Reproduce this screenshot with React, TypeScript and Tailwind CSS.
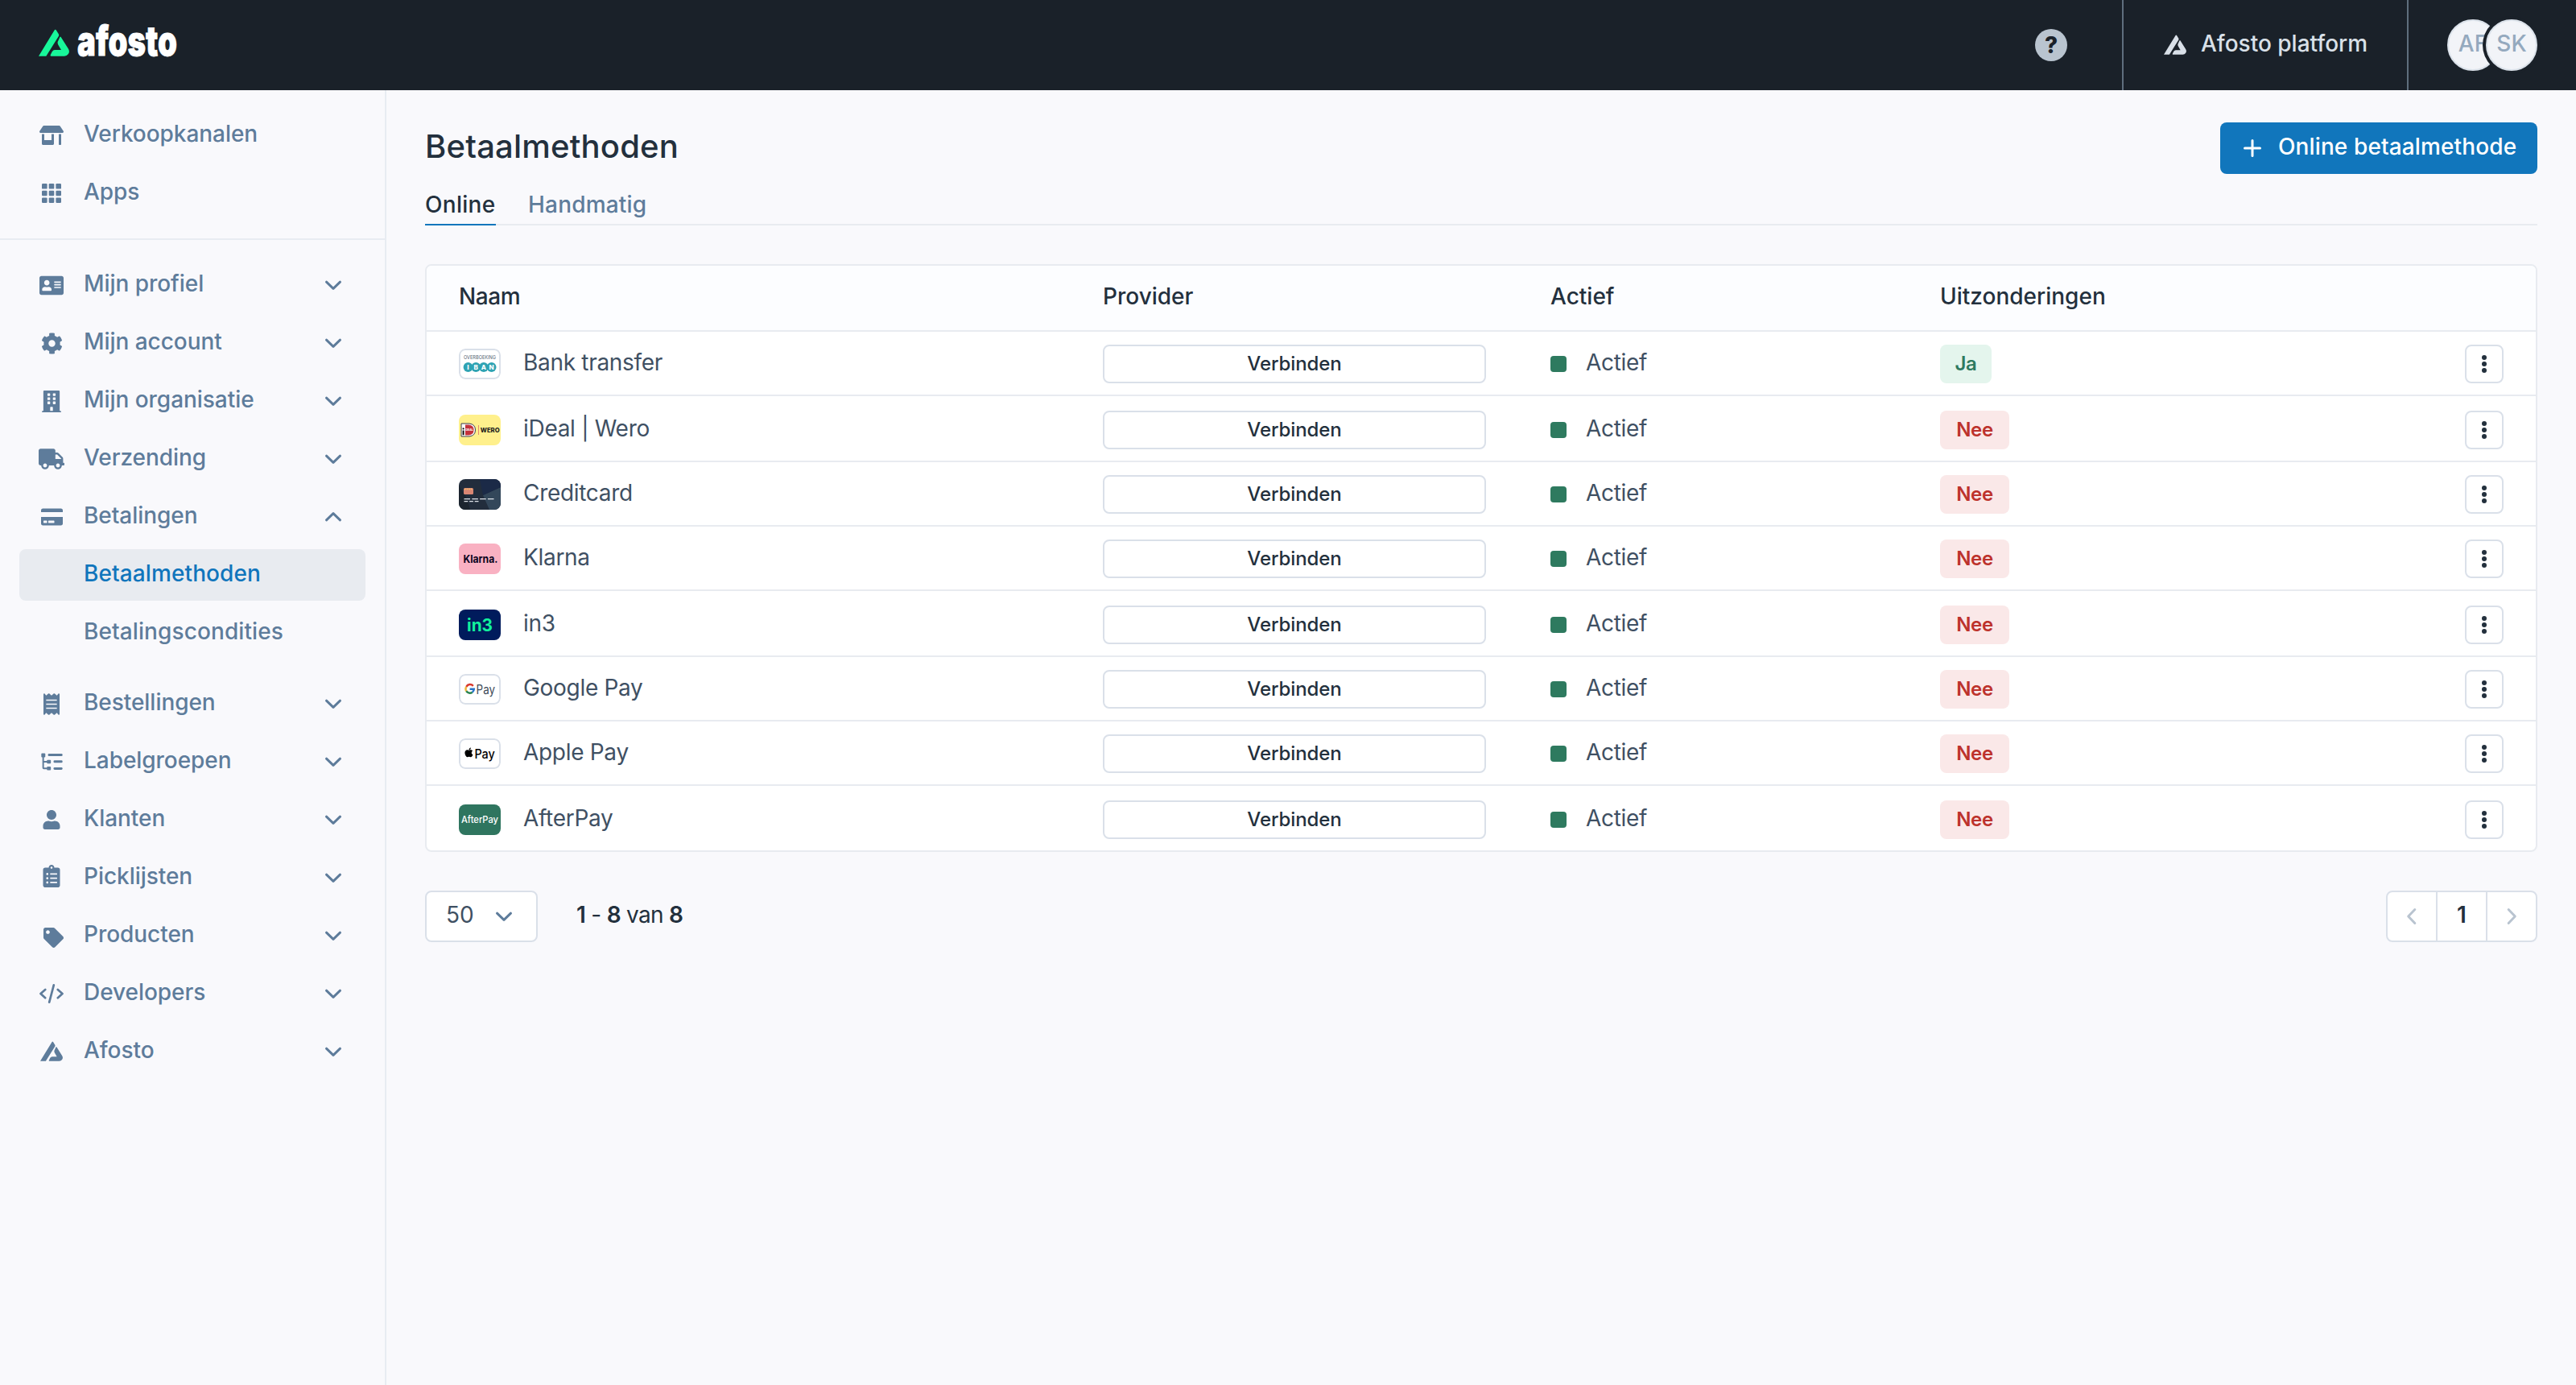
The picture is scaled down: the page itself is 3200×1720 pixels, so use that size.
import clsx from 'clsx'
import type { ReactNode } from 'react'
import {
    FaAddressCard,
    FaApple,
    FaBuilding,
    FaClipboardList,
    FaCog,
    FaCreditCard,
    FaReceipt,
    FaStoreAlt,
    FaTag,
    FaTruck,
    FaUser,
} from 'react-icons/fa'

interface IMenuItem {
    label: string
    icon: ReactNode
    open?: boolean
    children?: string[]
}

interface IPaymentMethod {
    name: string
    logo: ReactNode
    exceptions: boolean
    tall?: boolean
}

function AfostoMark({ className }: { className: string }) {
    return (
        <svg viewBox="0 0 114 100" fill="currentColor" className={className}>
            <path d="M0 100 58 5Q62-2 66 4L74 17Q77 22 74 27L28 100Z" />
            <path d="M83 29 111 73Q117 84 110 93Q105 100 96 100H47Q43 100 44 96L50 84Q54 77 60 77H84L73 58Q69 51 72 45L79 30Q81 26 83 29Z" />
        </svg>
    )
}

function Chevron({ className }: { className?: string }) {
    return (
        <svg
            viewBox="0 0 24 24"
            fill="none"
            stroke="currentColor"
            strokeWidth="3"
            strokeLinecap="round"
            strokeLinejoin="round"
            className={clsx('size-6 shrink-0', className)}
        >
            <path d="M3.5 8.2 12 16.3l8.5-8.1" />
        </svg>
    )
}

function AppsIcon() {
    return (
        <svg viewBox="0 0 24 24" fill="currentColor" className="size-6">
            {[0, 8.7, 17.4].map((y) =>
                [0, 8.7, 17.4].map((x) => (
                    <rect
                        key={`${x}-${y}`}
                        x={x}
                        y={y}
                        width="6.6"
                        height="6.6"
                        rx="1.2"
                    />
                )),
            )}
        </svg>
    )
}

function ListTreeIcon() {
    return (
        <svg
            viewBox="0 0 82 66"
            fill="currentColor"
            className="h-[22px] w-[27px]"
        >
            <rect x="1" y="1" width="15" height="15" rx="3" />
            <rect x="22" y="26" width="15" height="14" rx="3" />
            <rect x="22" y="51" width="15" height="14" rx="3" />
            <path d="M5 14h6v16h13v6H11v18q0 1 1 1h12v6H10q-5 0-5-5z" />
            <rect x="26" y="3" width="55" height="9" rx="4" />
            <rect x="47" y="28" width="34" height="9" rx="4" />
            <rect x="47" y="54" width="34" height="9" rx="4" />
        </svg>
    )
}

function CodeIcon() {
    return (
        <svg
            viewBox="0 0 30 24"
            fill="none"
            stroke="currentColor"
            strokeWidth="2.7"
            strokeLinecap="round"
            strokeLinejoin="round"
            className="h-6 w-[30px]"
        >
            <path d="M7.2 7 1.5 12l5.7 5.2M22.8 7l5.7 5-5.7 5.2M17.8 1.4l-5.6 21.2" />
        </svg>
    )
}

function Logo({
    bordered,
    children,
}: {
    bordered?: boolean
    children: ReactNode
}) {
    return (
        <svg
            viewBox="0 0 52 38"
            className="h-[38px] w-[52px] shrink-0 rounded-lg tracking-normal"
            fontFamily="Inter, sans-serif"
        >
            {children}
            {bordered && (
                <rect
                    x="1"
                    y="1"
                    width="50"
                    height="36"
                    rx="7"
                    fill="none"
                    stroke="#dae0e9"
                    strokeWidth="2"
                />
            )}
        </svg>
    )
}

const topMenu: IMenuItem[] = [
    {
        label: 'Verkoopkanalen',
        icon: <FaStoreAlt className="h-6 w-[30px]" />,
    },
    { label: 'Apps', icon: <AppsIcon /> },
]

const mainMenu: IMenuItem[] = [
    {
        label: 'Mijn profiel',
        icon: <FaAddressCard className="h-[27px] w-[30px]" />,
    },
    { label: 'Mijn account', icon: <FaCog className="size-[27px]" /> },
    {
        label: 'Mijn organisatie',
        icon: <FaBuilding className="h-[27px] w-6" />,
    },
    { label: 'Verzending', icon: <FaTruck className="h-[26px] w-8" /> },
    {
        label: 'Betalingen',
        icon: <FaCreditCard className="h-6 w-[27px]" />,
        open: true,
        children: ['Betaalmethoden', 'Betalingscondities'],
    },
    { label: 'Bestellingen', icon: <FaReceipt className="h-[27px] w-5" /> },
    { label: 'Labelgroepen', icon: <ListTreeIcon /> },
    { label: 'Klanten', icon: <FaUser className="h-6 w-[22px]" /> },
    {
        label: 'Picklijsten',
        icon: <FaClipboardList className="mb-1 h-7 w-[22px]" />,
    },
    {
        label: 'Producten',
        icon: <FaTag className="mt-1 ml-1 size-[25px]" />,
    },
    { label: 'Developers', icon: <CodeIcon /> },
    {
        label: 'Afosto',
        icon: <AfostoMark className="mb-px h-[25px] w-7" />,
    },
]

const methods: IPaymentMethod[] = [
    {
        name: 'Bank transfer',
        exceptions: true,
        logo: (
            <Logo bordered>
                <text
                    x="6"
                    y="12.8"
                    fontSize="6.6"
                    fill="#4d5d6e"
                    textLength="40"
                    lengthAdjust="spacingAndGlyphs"
                >
                    OVERBOEKING
                </text>
                {['I', 'B', 'A', 'N'].map((letter, index) => (
                    <g key={letter}>
                        <circle
                            cx={11.5 + index * 9.7}
                            cy="23"
                            r="5.9"
                            fill="#2fa3b3"
                        />
                        <text
                            x={11.5 + index * 9.7}
                            y="25.9"
                            fontSize="8"
                            fontWeight="800"
                            fill="#fff"
                            textAnchor="middle"
                        >
                            {letter}
                        </text>
                    </g>
                ))}
            </Logo>
        ),
    },
    {
        name: 'iDeal | Wero',
        exceptions: false,
        tall: true,
        logo: (
            <Logo>
                <rect width="52" height="38" fill="#fff08c" />
                <path
                    d="M3 11h10q7.5 1 7.5 8t-7.5 8H3z"
                    fill="#fff"
                    stroke="#3a3a48"
                    strokeWidth="1"
                />
                <path d="M8 12.6h4.5q6 .6 6 6.4t-6 6.4H8z" fill="#c4313a" />
                <circle cx="5.6" cy="17.4" r="1.1" fill="#111" />
                <path d="M4.6 19.6h2v5.6h-2z" fill="#111" />
                <text
                    x="8.4"
                    y="19.8"
                    fontSize="3.6"
                    fontWeight="700"
                    fill="#fff"
                >
                    DEAL
                </text>
                <path d="M24.5 13v12" stroke="#e58a6e" strokeWidth="1" />
                <text
                    x="26.8"
                    y="21.5"
                    fontSize="7.8"
                    fontWeight="800"
                    fill="#1d1c1c"
                    textLength="23.8"
                    lengthAdjust="spacingAndGlyphs"
                >
                    WERO
                </text>
            </Logo>
        ),
    },
    {
        name: 'Creditcard',
        exceptions: false,
        logo: (
            <Logo>
                <rect width="52" height="38" fill="#222d3c" />
                <path d="M52 10 30 20l8 18h14z" fill="#33475a" />
                <path d="M26 0h26v10L30 20z" fill="#1b2a47" />
                <path d="M0 38V8l10 16 4 14z" fill="#1b242e" />
                <rect
                    x="6"
                    y="11"
                    width="12"
                    height="8"
                    rx="1.5"
                    fill="#d98673"
                />
                <path
                    d="M7 12.5h10"
                    stroke="#f2c46a"
                    strokeWidth="1.6"
                    strokeDasharray="1.6 1"
                />
                <path
                    d="M6.5 24.7h38"
                    stroke="#dfe4ea"
                    strokeWidth="1.2"
                    strokeDasharray="7.6 2.2"
                />
                <path
                    d="M6.5 27.6h18.5"
                    stroke="#dfe4ea"
                    strokeWidth="1.2"
                    strokeDasharray="4.8 1.8"
                />
            </Logo>
        ),
    },
    {
        name: 'Klarna',
        exceptions: false,
        logo: (
            <Logo>
                <rect width="52" height="38" fill="#f9b1c2" />
                <text
                    x="5.4"
                    y="24.2"
                    fontSize="13.6"
                    fontWeight="700"
                    fill="#0b051d"
                    textLength="43"
                    lengthAdjust="spacingAndGlyphs"
                >
                    Klarna.
                </text>
            </Logo>
        ),
    },
    {
        name: 'in3',
        exceptions: false,
        tall: true,
        logo: (
            <Logo>
                <rect width="52" height="38" fill="#001b5c" />
                <text
                    x="10"
                    y="26.8"
                    fontSize="21"
                    fontWeight="700"
                    fill="#11f29c"
                    textLength="32"
                    lengthAdjust="spacingAndGlyphs"
                >
                    in3
                </text>
            </Logo>
        ),
    },
    {
        name: 'Google Pay',
        exceptions: false,
        logo: (
            <Logo bordered>
                <g fill="none" strokeWidth="2.5">
                    <path
                        d="M17.8 14.8A5.2 5.2 0 0 0 9.3 15.9"
                        stroke="#d93a2f"
                    />
                    <path d="M9.3 15.9a5.2 5.2 0 0 0 0 5.4" stroke="#efb53c" />
                    <path
                        d="M9.3 21.3a5.2 5.2 0 0 0 7.4 1.4"
                        stroke="#2c8552"
                    />
                    <path
                        d="M16.7 22.7a5.2 5.2 0 0 0 2.1-3.9h-5.2"
                        stroke="#2673c9"
                    />
                </g>
                <text
                    x="21.6"
                    y="24.9"
                    fontSize="15.6"
                    fill="#3e4b59"
                    textLength="23.4"
                    lengthAdjust="spacingAndGlyphs"
                >
                    Pay
                </text>
            </Logo>
        ),
    },
    {
        name: 'Apple Pay',
        exceptions: false,
        logo: (
            <Logo bordered>
                <FaApple x="5.6" y="10.6" size="13.6" color="#000" />
                <text
                    x="19.4"
                    y="24.6"
                    fontSize="15.6"
                    fontWeight="500"
                    textLength="25.4"
                    lengthAdjust="spacingAndGlyphs"
                >
                    Pay
                </text>
            </Logo>
        ),
    },
    {
        name: 'AfterPay',
        exceptions: false,
        logo: (
            <Logo>
                <rect width="52" height="38" fill="#2f755f" />
                <text
                    x="3"
                    y="22.6"
                    fontSize="12"
                    fontWeight="500"
                    fill="#fff"
                    textLength="46"
                    lengthAdjust="spacingAndGlyphs"
                >
                    AfterPay
                </text>
            </Logo>
        ),
    },
]

function Header() {
    return (
        <header className="flex h-28 shrink-0 items-center justify-between bg-[#1a2129] pl-12 text-[#d9e0e8]">
            <div className="flex items-center">
                <AfostoMark className="mb-1.5 h-[34px] w-[38px] text-[#18f79a]" />
                <svg
                    viewBox="0 0 140 66"
                    className="mb-4 ml-2 h-[66px] w-[140px] overflow-visible"
                    fontFamily="Inter, sans-serif"
                >
                    <text
                        x="2"
                        y="54"
                        fontSize="51"
                        fontWeight="900"
                        fill="#fff"
                        stroke="#fff"
                        strokeWidth="0.8"
                        textLength="124"
                        lengthAdjust="spacingAndGlyphs"
                    >
                        afosto
                    </text>
                </svg>
            </div>
            <div className="flex h-full items-center">
                <div className="mr-[68px] flex size-10 items-center justify-center rounded-full bg-[#b9c4cf] font-extrabold text-[#1a2129]">
                    ?
                </div>
                <div className="flex h-full w-[356px] items-center border-x-2 border-[#5f6e7d] pl-[50px]">
                    <AfostoMark className="mb-0.5 h-[25px] w-7" />
                    <div className="pb-1 pl-[18px]">Afosto platform</div>
                </div>
                <div className="flex pr-12 pl-12 text-[#94a9be]">
                    <div className="flex size-16 items-center justify-center rounded-full border-2 border-[#dbe2ea] bg-[#f2f4f8] pb-1">
                        AF
                    </div>
                    <div className="-ml-4 flex size-16 items-center justify-center rounded-full border-2 border-[#dbe2ea] bg-[#f2f4f8] pb-1 ring-4 ring-[#1a2129]">
                        SK
                    </div>
                </div>
            </div>
        </header>
    )
}

function MenuEntry({ item, chevron }: { item: IMenuItem; chevron?: boolean }) {
    return (
        <>
            <div className="flex h-16 items-center rounded-lg pr-7 pl-6">
                <div className="flex w-8 justify-center">{item.icon}</div>
                <div className="flex-1 pb-1 pl-6">{item.label}</div>
                {chevron && (
                    <Chevron className={clsx(item.open && 'rotate-180')} />
                )}
            </div>
            {item.children && (
                <div className="mb-4 flex flex-col gap-2">
                    {item.children.map((child, index) => (
                        <div
                            key={child}
                            className={clsx(
                                'flex h-16 items-center rounded-lg pb-1 pl-20 tracking-[0.1px]',
                                index === 0 && 'bg-[#e8ebf0] text-[#1075bc]',
                            )}
                        >
                            {child}
                        </div>
                    ))}
                </div>
            )}
        </>
    )
}

function Sidebar() {
    return (
        <nav className="w-[480px] shrink-0 border-r-2 border-[#e8ecf2] pt-6 font-[550] tracking-[-0.05px] text-[#5e7c9b]">
            <div className="flex flex-col gap-2 border-b-2 border-[#e8ecf2] pr-6 pb-6 pl-6">
                {topMenu.map((item) => (
                    <MenuEntry key={item.label} item={item} />
                ))}
            </div>
            <div className="flex flex-col gap-2 pt-6 pr-6 pl-6">
                {mainMenu.map((item) => (
                    <MenuEntry key={item.label} item={item} chevron />
                ))}
            </div>
        </nav>
    )
}

function MethodRow({ method, last }: { method: IPaymentMethod; last: boolean }) {
    return (
        <div
            className={clsx(
                'flex items-start border-[#e8ebf0] px-10',
                method.tall && 'h-[82px] pt-[18px]',
                !method.tall && 'h-20',
                !method.tall && (last ? 'pt-[18px]' : 'pt-4'),
                !last && 'border-b-2',
            )}
        >
            <div className="flex h-12 w-[800px] items-center">
                {method.logo}
                <div className="pb-1 pl-7">{method.name}</div>
            </div>
            <div className="w-[556px]">
                <div className="flex h-12 w-[476px] items-center justify-center rounded-lg border-2 border-[#dae0e9] pb-px text-2xl font-[550] tracking-[-0.1px] text-[#23303d]">
                    Verbinden
                </div>
            </div>
            <div className="flex h-12 w-[484px] items-center">
                <div className="size-5 rounded-sm bg-[#2e7a5f]" />
                <div className="pb-1 pl-6">Actief</div>
            </div>
            <div className="flex-1">
                <div
                    className={clsx(
                        'flex h-12 items-center justify-center rounded-lg pb-px text-2xl font-semibold',
                        method.exceptions
                            ? 'w-16 bg-[#e4f5ed] text-[#2e7a5f]'
                            : 'w-[86px] bg-[#fae8e8] text-[#bd322c]',
                    )}
                >
                    {method.exceptions ? 'Ja' : 'Nee'}
                </div>
            </div>
            <div className="flex size-12 flex-col items-center justify-center gap-0.5 rounded-lg border-2 border-[#dae0e9]">
                <div className="size-1.5 rounded-full bg-[#23303d]" />
                <div className="size-1.5 rounded-full bg-[#23303d]" />
                <div className="size-1.5 rounded-full bg-[#23303d]" />
            </div>
        </div>
    )
}

export default function App() {
    return (
        <div className="flex h-[1720px] w-[3200px] flex-col overflow-hidden bg-[#f9f9fc] font-['Inter',sans-serif] text-[28px] leading-8 font-medium">
            <Header />
            <div className="flex flex-1">
                <Sidebar />
                <main className="flex-1 px-12 pt-10 text-[#23303d]">
                    <div className="flex h-16 items-center justify-between">
                        <h1 className="pb-1 text-[40px] leading-12 tracking-[0.2px]">
                            Betaalmethoden
                        </h1>
                        <div className="flex h-16 w-[394px] items-center rounded-lg bg-[#1176bc] pl-[29px] text-white">
                            <svg
                                viewBox="0 0 22 22"
                                stroke="currentColor"
                                strokeWidth="3"
                                strokeLinecap="round"
                                className="size-[22px]"
                            >
                                <path d="M11 1.5v19M1.5 11h19" />
                            </svg>
                            <div className="pb-1 pl-[21px] font-[550] tracking-[0.12px]">
                                Online betaalmethode
                            </div>
                        </div>
                    </div>

                    <div className="flex h-16 items-end gap-10 border-b-2 border-[#e8ebf0] font-[550]">
                        <div className="-mb-0.5 w-[88px] border-b-2 border-[#1176bc] pb-2 tracking-[0.3px]">
                            Online
                        </div>
                        <div className="pb-2 tracking-[0.2px] text-[#5e7c9b]">
                            Handmatig
                        </div>
                    </div>

                    <div className="mt-12 overflow-hidden rounded-lg border-2 border-[#e8ebf0] bg-white">
                        <div className="flex h-[82px] items-center border-b-2 border-[#e8ebf0] bg-[#fcfdff] px-10 pb-1 font-[550]">
                            <div className="w-[800px] tracking-[-0.4px]">
                                Naam
                            </div>
                            <div className="w-[556px]">Provider</div>
                            <div className="w-[484px]">Actief</div>
                            <div>Uitzonderingen</div>
                        </div>
                        <div className="font-normal tracking-[-0.3px] text-[#3f5063]">
                            {methods.map((method, index) => (
                                <MethodRow
                                    key={method.name}
                                    method={method}
                                    last={index === methods.length - 1}
                                />
                            ))}
                        </div>
                    </div>

                    <div className="mt-12 flex items-center">
                        <div className="flex h-16 w-[140px] items-center justify-between rounded-lg border-2 border-[#dae0e9] bg-white pr-7 pl-6 font-normal text-[#3f5063]">
                            <div className="pb-1">50</div>
                            <Chevron className="text-[#5e7c9b]" />
                        </div>
                        <div className="pb-1 pl-12 font-normal tracking-[-0.7px]">
                            <b className="font-semibold">1</b> -{' '}
                            <b className="font-semibold">8</b> van{' '}
                            <b className="font-semibold">8</b>
                        </div>
                        <div className="ml-auto flex h-16 w-[188px] rounded-lg border-2 border-[#dae0e9] bg-white">
                            <div className="flex w-[62px] items-center justify-center border-r-2 border-[#dae0e9] text-[#b9c4d0]">
                                <Chevron className="rotate-90" />
                            </div>
                            <div className="flex w-[62px] items-center justify-center border-r-2 border-[#dae0e9] pb-1 font-semibold">
                                1
                            </div>
                            <div className="flex flex-1 items-center justify-center text-[#b9c4d0]">
                                <Chevron className="-rotate-90" />
                            </div>
                        </div>
                    </div>
                </main>
            </div>
        </div>
    )
}
